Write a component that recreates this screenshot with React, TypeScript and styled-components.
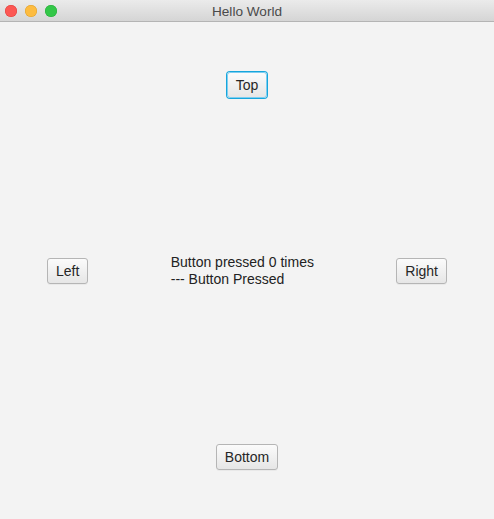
import React from "react";
import styled, { createGlobalStyle } from "styled-components";

const Global = createGlobalStyle`
  html, body { margin: 0; padding: 0; background: #f3f3f3; }
  body { font-family: "Liberation Sans", Arial, sans-serif; }
`;

const Window = styled.div`
  width: 494px;
  height: 519px;
  display: flex;
  flex-direction: column;
  background: #f3f3f3;
  overflow: hidden;
`;

const TitleBar = styled.div`
  position: relative;
  height: 21px;
  flex: none;
  display: flex;
  align-items: center;
  justify-content: center;
  background: linear-gradient(#ebebeb, #d5d5d5);
  border-bottom: 1px solid #b4b4b4;
`;

const Lights = styled.div`
  position: absolute;
  left: 5px;
  top: 5px;
  display: flex;
  gap: 8px;
`;

const Light = styled.span<{ $c: string; $b: string }>`
  width: 12px;
  height: 12px;
  border-radius: 50%;
  background: ${(p) => p.$c};
  box-shadow: inset 0 0 0 0.5px ${(p) => p.$b};
`;

const Title = styled.div`
  font-size: 13.6px;
  color: #4a4a4a;
  margin-top: 1px;
`;

const Body = styled.div`
  flex: 1;
  display: flex;
  flex-direction: column;
`;

const TopRow = styled.div`
  display: flex;
  justify-content: center;
  padding: 50px 0 50px;
`;

const BottomRow = styled.div`
  display: flex;
  justify-content: center;
  padding: 50px 0 49px;
`;

const MiddleRow = styled.div`
  flex: 1;
  display: flex;
  align-items: center;
`;

const Side = styled.div<{ $l: number; $r: number }>`
  padding-left: ${(p) => p.$l}px;
  padding-right: ${(p) => p.$r}px;
  display: flex;
`;

const Center = styled.div`
  flex: 1;
  display: flex;
  justify-content: center;
  align-items: center;
`;

const Label = styled.div`
  font-size: 14px;
  line-height: 17px;
  color: #222;
`;

const Button = styled.button<{ $focused?: boolean }>`
  height: 26px;
  padding: 0 8px;
  font-family: "Liberation Sans", Arial, sans-serif;
  font-size: 14px;
  color: #262626;
  border-radius: 3px;
  border: 1px solid ${(p) => (p.$focused ? "#7fcdf0" : "#b5b5b5")};
  background: linear-gradient(#fbfbfb, #e6e6e6);
  box-shadow: ${(p) => (p.$focused ? "0 0 0 1px #16a6dc" : "0 1px 0 rgba(0,0,0,0.04)")};
  cursor: default;
  outline: none;
`;

export default function App() {
  return (
    <>
      <Global />
      <Window>
        <TitleBar>
          <Lights>
            <Light $c="#fc5753" $b="#de3e3a" />
            <Light $c="#fdbc40" $b="#de9f2a" />
            <Light $c="#33c748" $b="#27a93a" />
          </Lights>
          <Title>Hello World</Title>
        </TitleBar>
        <Body>
          <TopRow>
            <Button $focused>Top</Button>
          </TopRow>
          <MiddleRow>
            <Side $l={47} $r={50}>
              <Button>Left</Button>
            </Side>
            <Center>
              <Label>
                Button pressed 0 times
                <br />
                --- Button Pressed
              </Label>
            </Center>
            <Side $l={50} $r={47}>
              <Button>Right</Button>
            </Side>
          </MiddleRow>
          <BottomRow>
            <Button>Bottom</Button>
          </BottomRow>
        </Body>
      </Window>
    </>
  );
}
